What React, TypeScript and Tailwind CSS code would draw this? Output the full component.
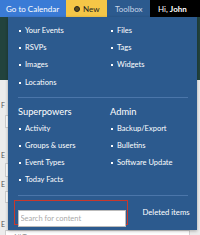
import React from "react";

const font = { fontFamily: "Lato, 'Noto Sans', sans-serif" };

function Item({ label }: { label?: string }) {
  if (!label) return <div className="h-[17.3px]" />;
  return (
    <div className="h-[17.3px] flex items-center text-[7.5px] text-white leading-none">
      <span className="w-[2px] h-[2px] bg-white ml-[1px] mr-[4px] shrink-0" />
      <span className="whitespace-nowrap">{label}</span>
    </div>
  );
}

function Row({ label }: { label?: string }) {
  if (!label) return <div className="h-[17px]" />;
  return (
    <div className="h-[17px] flex items-center text-[7.5px] text-white leading-none">
      <span className="w-[2px] h-[2px] bg-white ml-[1px] mr-[4px] shrink-0" />
      <span className="whitespace-nowrap">{label}</span>
    </div>
  );
}

export default function App() {
  return (
    <div className="relative w-[200px] h-[235px] overflow-hidden bg-[#ececec]" style={font}>
      {/* top bar */}
      <div className="flex h-[17px] text-[8px] leading-none">
        <div className="w-[66px] bg-[#3a7bd6] text-white flex items-center pl-[6px] whitespace-nowrap">
          Go to Calendar
        </div>
        <div className="w-[41px] bg-[#f5c647] text-[#222] flex items-center pl-[8px] whitespace-nowrap">
          <span className="w-[6px] h-[6px] rounded-full border-[1.5px] border-[#222] bg-[#5a4a1a] mr-[3px]" />
          New
        </div>
        <div className="w-[43px] bg-[#2c5a8e] text-[#c9d6e8] flex items-center pl-[8px] whitespace-nowrap">
          Toolbox
        </div>
        <div className="flex-1 bg-black text-white flex items-center pl-[8px] whitespace-nowrap">
          Hi,&nbsp;<span className="font-bold">John</span>
        </div>
      </div>

      {/* page background */}
      <div className="h-[63px] bg-[#22433d]" />
      <div className="flex flex-col text-[7px] text-[#555] leading-none">
        <div className="pl-[1px] mt-[22px]">F</div>
        <div className="ml-[5px] mt-[6px] h-[13px] w-[185px] bg-white border border-[#cfcfcf]" />
        <div className="pl-[1px] mt-[24px]">E</div>
        <div className="ml-[5px] mt-[4px] h-[14px] w-[185px] bg-white border border-[#cfcfcf]" />
        <div className="pl-[1px] mt-[4px]">E</div>
        <div className="ml-[5px] mt-[3px] h-[12px] w-[185px] bg-white border border-[#cfcfcf]" />
        <div className="pl-[1px] mt-[18px]">E</div>
        <div className="ml-[5px] mt-[2px] h-[14px] w-[185px] bg-white border border-[#cfcfcf] pl-[7px] pt-[3px] text-[#999]">
          All Tags
        </div>
      </div>

      {/* dropdown */}
      <div className="absolute left-[8px] top-[17px] w-[189px] h-[213px] bg-[#2c5a8e] px-[10px] pt-[5px] shadow-[0_1px_3px_rgba(0,0,0,0.3)]">
        <div className="grid grid-cols-[92px_1fr]">
          <Item label="Your Events" />
          <Item label="Files" />
          <Item label="RSVPs" />
          <Item label="Tags" />
          <Item label="Images" />
          <Item label="Widgets" />
          <Item label="Locations" />
          <Item />
        </div>
        <div className="mt-[5.5px] h-px bg-[#4b76aa] mr-[-1px]" />
        <div className="grid grid-cols-[92px_1fr] mt-[5.5px]">
          <div className="flex flex-col">
            <div className="h-[17px] flex items-center text-[9.3px] text-white leading-none">Superpowers</div>
            <Row label="Activity" />
            <Row label="Groups & users" />
            <Row label="Event Types" />
            <Row label="Today Facts" />
          </div>
          <div className="flex flex-col">
            <div className="h-[17px] flex items-center text-[9.3px] text-white leading-none">Admin</div>
            <Row label="Backup/Export" />
            <Row label="Bulletins" />
            <Row label="Software Update" />
          </div>
        </div>
        <div className="mt-[7px] h-px bg-[#4b76aa] mr-[-1px]" />
        <div className="flex items-center mt-[4px]">
          <div className="ml-[-4px] w-[114px] h-[25px] border-[1.5px] border-[#c8382c] pl-[2.5px] pr-[1px] pt-[1.5px]">
            <input
              className="w-[108px] h-[17px] bg-white border border-[#bbb] px-[2px] text-[7.5px] text-[#333] placeholder:text-[#aaa] outline-none"
              placeholder="Search for content"
              style={font}
            />
          </div>
          <span className="ml-[15px] text-[7.7px] text-white whitespace-nowrap leading-none">Deleted items</span>
        </div>
      </div>

      {/* right edge teal strip is covered by top background */}
    </div>
  );
}
